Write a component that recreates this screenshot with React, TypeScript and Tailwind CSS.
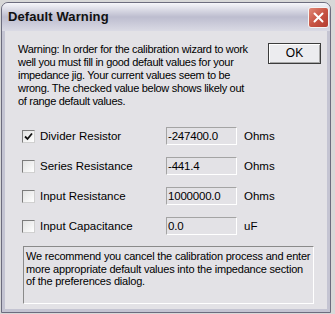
import React from "react";

const rows = [
  { label: "Divider Resistor", value: "-247400.0", unit: "Ohms", checked: true },
  { label: "Series Resistance", value: "-441.4", unit: "Ohms", checked: false },
  { label: "Input Resistance", value: "1000000.0", unit: "Ohms", checked: false },
  { label: "Input Capacitance", value: "0.0", unit: "uF", checked: false },
];

function CheckBox({ checked }: { checked: boolean }) {
  return (
    <div className="w-[13px] h-[13px] border border-t-[#7c7c7c] border-l-[#7c7c7c] border-r-[#d0d0d0] border-b-[#d0d0d0] bg-gradient-to-br from-[#e2e2e2] to-white flex items-center justify-center">
      {checked && (
        <svg width="9" height="9" viewBox="0 0 9 9">
          <path d="M1 4.5 L3.5 7 L8 1.5" stroke="#111" strokeWidth="1.8" fill="none" />
        </svg>
      )}
    </div>
  );
}

export default function App() {
  return (
    <div
      className="w-[335px] h-[314px] bg-[#d8d8d8] pl-[1px] pt-[2px] overflow-hidden"
      style={{ fontFamily: '"Liberation Sans", Arial, sans-serif' }}
    >
      <div className="w-[330px] h-[311px] rounded-t-[7px] border border-[#6c6c7e] bg-[#c4c4d2] flex flex-col">
        {/* title bar */}
        <div className="h-[28px] rounded-t-[6px] bg-gradient-to-b from-[#f6f6fa] via-[#bdbdcf] to-[#dadae4] flex items-center justify-between pl-[6px] pr-[1px]">
          <span className="text-[13px] font-bold text-[#111] tracking-[0.1px]">Default Warning</span>
          <div className="w-[21px] h-[21px] rounded-[3px] border border-[#f4f4f4] bg-gradient-to-br from-[#e08878] via-[#c85444] to-[#b33c30] flex items-center justify-center">
            <svg width="11" height="11" viewBox="0 0 11 11">
              <path d="M1.5 1.5 L9.5 9.5 M9.5 1.5 L1.5 9.5" stroke="white" strokeWidth="2" strokeLinecap="round" />
            </svg>
          </div>
        </div>

        {/* body */}
        <div className="flex-1 mx-[3px] mb-[3px] bg-[#e3e2e6] pt-[12px] pl-[13px] text-[11px] leading-[13px] text-black">
          <div className="flex">
            <p className="w-[250px] whitespace-nowrap tracking-[-0.3px]">
              Warning: In order for the calibration wizard to work
              <br />
              well you must fill in good default values for your
              <br />
              impedance jig. Your current values seem to be
              <br />
              wrong. The checked value below shows likely out
              <br />
              of range default values.
            </p>
            <button className="w-[53px] h-[21px] border border-[#3c3c3c] bg-[#ececef] shadow-[inset_1px_1px_0_#fff,inset_-1px_-1px_0_#a8a8a8] text-[12px]">
              OK
            </button>
          </div>

          <div className="mt-[19px] flex flex-col gap-[12px]">
            {rows.map((r) => (
              <div key={r.label} className="flex items-center h-[18px]">
                <div className="w-[22px] pl-[4px]">
                  <CheckBox checked={r.checked} />
                </div>
                <span className="w-[126px] text-[11.5px]">{r.label}</span>
                <div className="w-[71px] h-[18px] border border-t-[#a4a4a4] border-l-[#a4a4a4] border-r-white border-b-white pl-[1px] text-[11.5px] leading-[16px] tracking-[-0.2px]">
                  {r.value}
                </div>
                <span className="pl-[7px] text-[11.5px]">{r.unit}</span>
              </div>
            ))}
          </div>

          <div className="mt-[11px] ml-[5px] w-[291px] h-[58px] border border-t-[#8a8a8a] border-l-[#8a8a8a] border-r-white border-b-white pt-[3px] pl-[2px] text-[11px] leading-[12.5px] whitespace-nowrap tracking-[-0.2px]">
            We recommend you cancel the calibration process and enter
            <br />
            more appropriate default values into the impedance section
            <br />
            of the preferences dialog.
          </div>
        </div>
      </div>
    </div>
  );
}
